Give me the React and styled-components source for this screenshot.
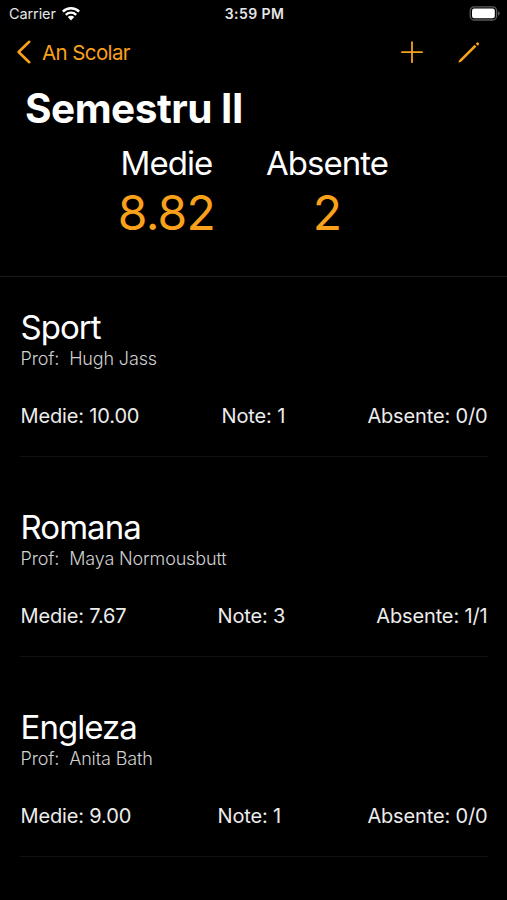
import React from "react";
import styled, { createGlobalStyle } from "styled-components";

const subjects = [
  { name: "Sport", teacher: "Hugh Jass", average: "10.00", grades: 1, absences: "0/0" },
  { name: "Romana", teacher: "Maya Normousbutt", average: "7.67", grades: 3, absences: "1/1" },
  { name: "Engleza", teacher: "Anita Bath", average: "9.00", grades: 1, absences: "0/0" },
];

const App = () => {
  return (
    <>
      <GlobalStyle />
      <Screen>
        <StatusBar>
          <Carrier>
            <span>Carrier</span>
            <svg width="18" height="14" viewBox="0 0 18 14" fill="none" stroke="#fff">
              <path d="M.9 4.7a11.5 11.5 0 0 1 16.2 0" strokeWidth="2.5" />
              <path d="M3.8 7.8a7.4 7.4 0 0 1 10.4 0" strokeWidth="2.4" />
              <path d="M9 13.4 5.8 10.1a4.6 4.6 0 0 1 6.4 0z" fill="#fff" stroke="none" />
            </svg>
          </Carrier>
          <Clock>3:59 PM</Clock>
          <Battery>
            <svg width="31" height="15" viewBox="0 0 31 15">
              <rect x="1.2" y="0.8" width="26.4" height="13.2" rx="4" fill="#000" stroke="#5c5c5c" strokeWidth="1.3" />
              <rect x="3" y="2.6" width="22.8" height="9.6" rx="2.2" fill="#fff" />
              <path d="M29 5.2v4.6q1.7-.8 1.7-2.3T29 5.2z" fill="#5c5c5c" />
            </svg>
          </Battery>
        </StatusBar>

        <NavBar>
          <NavButton type="button">
            <svg width="15" height="24" viewBox="0 0 15 24" fill="none" stroke="currentColor">
              <path d="M13.2 1.8 2.6 12l10.6 10.2" strokeWidth="2.6" strokeLinecap="round" strokeLinejoin="round" />
            </svg>
            <span>An Scolar</span>
          </NavButton>
          <NavActions>
            <NavButton type="button" aria-label="Adauga">
              <svg width="22" height="22" viewBox="0 0 22 22" stroke="currentColor">
                <path d="M11 1.2v20M1 11.2h20" strokeWidth="1.8" strokeLinecap="round" />
              </svg>
            </NavButton>
            <NavButton type="button" aria-label="Editeaza">
              <svg width="22" height="22" viewBox="0 0 22 22" fill="currentColor">
                <path d="M.4 21.8 1.3 18.9 16.6 3.7l1.9 1.9L3.2 20.8z" />
                <path d="m17.7 2.7 1-1a1.5 1.5 0 0 1 2.1 2.1l-1 1z" />
              </svg>
            </NavButton>
          </NavActions>
        </NavBar>

        <Title>Semestru II</Title>

        <Summary>
          <Total>
            <TotalLabel>Medie</TotalLabel>
            <TotalValue>8.82</TotalValue>
          </Total>
          <Total>
            <TotalLabel>Absente</TotalLabel>
            <TotalValue>2</TotalValue>
          </Total>
        </Summary>

        <SubjectList>
          {subjects.map((subject) => (
            <Subject key={subject.name}>
              <SubjectName>{subject.name}</SubjectName>
              <Teacher>
                <span>Prof:</span>
                <span>{subject.teacher}</span>
              </Teacher>
              <Stats>
                <span>Medie: {subject.average}</span>
                <span>Note: {subject.grades}</span>
                <span>Absente: {subject.absences}</span>
              </Stats>
            </Subject>
          ))}
        </SubjectList>
      </Screen>
    </>
  );
};

const GlobalStyle = createGlobalStyle`
  body {
    margin: 0;
    background: #000;
  }
  * {
    box-sizing: border-box;
  }
`;

const Screen = styled.main`
  height: 900px;
  overflow: hidden;
  background: #000;
  color: #fff;
  font-family: Inter, "Liberation Sans", sans-serif;
`;

const StatusBar = styled.div`
  display: grid;
  grid-template-columns: 1fr auto 1fr;
  align-items: center;
  height: 27px;
  padding: 0 7px 0 9px;
  font-size: 14.5px;
  color: #e6e6e6;
`;

const Carrier = styled.div`
  display: flex;
  align-items: center;
  gap: 6px;
  letter-spacing: -0.1px;
`;

const Clock = styled.div`
  font-weight: 600;
  font-size: 14px;
  letter-spacing: 0.4px;
`;

const Battery = styled.div`
  display: flex;
  justify-content: flex-end;
`;

const NavBar = styled.nav`
  display: flex;
  align-items: center;
  justify-content: space-between;
  height: 50px;
  padding: 0 27px 0 16px;
`;

const NavButton = styled.button`
  display: flex;
  align-items: center;
  gap: 11px;
  padding: 0;
  border: 0;
  background: none;
  color: #f9a11b;
  font: inherit;
  font-size: 20.5px;
  letter-spacing: -0.6px;
`;

const NavActions = styled.div`
  display: flex;
  gap: 35px;
`;

const Title = styled.h1`
  margin: 0;
  padding: 0 25px;
  height: 64px;
  line-height: 64px;
  font-size: 40.5px;
  font-weight: 700;
  letter-spacing: -0.5px;
`;

const Summary = styled.section`
  display: flex;
  justify-content: center;
  gap: 51px;
  height: 136px;
  padding: 2px 1px 0 0;
  border-bottom: 1px solid #191919;
`;

const Total = styled.div`
  text-align: center;
`;

const TotalLabel = styled.div`
  height: 41px;
  line-height: 41px;
  font-size: 33px;
  letter-spacing: -0.95px;
`;

const TotalValue = styled.div`
  height: 58px;
  line-height: 58px;
  color: #f9a11b;
  font-size: 48px;
  font-weight: 400;
  letter-spacing: -0.8px;
`;

const SubjectList = styled.div`
  padding: 0 19px 0 20px;
`;

const Subject = styled.article`
  height: 200px;
  padding: 50px 0 0 0.5px;
  border-bottom: 1px solid #101010;

  &:first-child {
    height: 180px;
    padding-top: 30px;
  }
`;

const SubjectName = styled.h2`
  margin: 0;
  height: 40px;
  line-height: 40px;
  font-size: 33px;
  font-weight: 400;
  letter-spacing: -0.95px;
`;

const Teacher = styled.div`
  display: flex;
  gap: 10px;
  height: 22px;
  margin-top: 1px;
  line-height: 22px;
  color: #d0d0d0;
  font-size: 18px;
  font-weight: 300;
  letter-spacing: -0.15px;
`;

const Stats = styled.div`
  display: flex;
  justify-content: space-between;
  margin: 33px 0.5px 0 0;
  line-height: 26px;
  color: #ececec;
  font-size: 20px;
  letter-spacing: -0.15px;
`;

export default App;
